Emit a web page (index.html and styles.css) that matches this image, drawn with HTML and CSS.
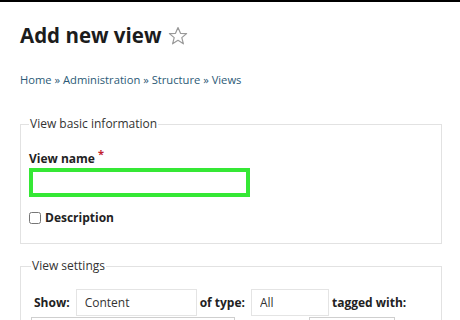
FILE: index.html
```html
<!DOCTYPE html>
<html lang="en">
<head>
    <meta charset="UTF-8">
    <meta name="viewport" content="width=device-width, initial-scale=1.0">
    <title>Add new view</title>
    <link rel="stylesheet" href="styles.css">
</head>
<body>

    <div class="topbar"></div>

    <div class="page">
        <h1 class="title">Add new view
            <svg class="star" width="20" height="20" viewBox="0 0 20 20">
                <polygon points="10,1.5 12.5,7.3 18.6,7.6 13.8,11.6 15.4,17.8 10,14.3 4.6,17.8 6.2,11.6 1.4,7.6 7.5,7.3" fill="none" stroke="#999" stroke-width="1.2" stroke-linejoin="round"/>
            </svg>
        </h1>

        <div class="breadcrumb">
            <a href="#">Home</a> » <a href="#">Administration</a> » <a href="#">Structure</a> » <a href="#">Views</a>
        </div>

        <fieldset class="box basic">
            <legend>View basic information</legend>
            <label class="field-label">View name <span class="req">*</span></label>
            <input type="text" class="name-input">
            <label class="check"><input type="checkbox"> Description</label>
        </fieldset>

        <fieldset class="box settings">
            <legend>View settings</legend>
            <div class="row">
                <span class="lbl">Show:</span>
                <input type="text" class="sel sel-show" value="Content">
                <span class="lbl">of type:</span>
                <input type="text" class="sel sel-type" value="All">
                <span class="lbl">tagged with:</span>
            </div>
            <div class="row next">
                <input type="text" class="sel sel-a">
                <input type="text" class="sel sel-b">
            </div>
        </fieldset>
    </div>

</body>
</html>
```

FILE: styles.css
```css
body {
    margin: 0;
    font-family: "Open Sans", "DejaVu Sans", sans-serif;
    color: #222;
    background: #fff;
    overflow: hidden;
}
.topbar {
    height: 2px;
    background: #000;
}
.page {
    padding: 0 18px 0 20px;
}
.title {
    margin: 20px 0 0;
    font-size: 20.5px;
    line-height: 26px;
    font-weight: bold;
    color: #1c1c1c;
    display: flex;
    align-items: center;
    gap: 7px;
}
.star {
    margin-top: 1px;
}
.breadcrumb {
    margin-top: 25px;
    font-size: 11.2px;
    line-height: 14px;
    color: #2b5a76;
}
.breadcrumb a {
    color: #2b5a76;
    text-decoration: none;
}
.box {
    margin: 0;
    border: 1px solid #e2e2e2;
    padding: 0 8px;
}
.box legend {
    padding: 0 1px;
    font-size: 12px;
    line-height: 14px;
    color: #333;
}
.basic {
    margin-top: 30px;
    padding-bottom: 18px;
}
.field-label {
    display: block;
    margin-top: 15px;
    font-size: 12px;
    line-height: 15px;
    font-weight: bold;
}
.req {
    color: #c21e2e;
    font-size: 11px;
    vertical-align: 5px;
}
.name-input {
    display: block;
    box-sizing: border-box;
    width: 221px;
    height: 29px;
    margin: 2px 0 0;
    border: 4px solid #35e835;
    outline: none;
    padding: 0;
}
.check {
    display: flex;
    align-items: center;
    gap: 4px;
    margin-top: 13px;
    font-size: 12px;
    font-weight: bold;
    line-height: 15px;
}
.check input {
    margin: 0;
    width: 12px;
    height: 12px;
}
.settings {
    margin-top: 15px;
    padding-left: 10px;
}
.row {
    display: flex;
    align-items: center;
    margin-top: 16px;
}
.lbl {
    font-size: 12px;
    font-weight: bold;
    margin: 0 6px 0 3px;
}
.sel {
    box-sizing: border-box;
    height: 27px;
    border: 1px solid #e4e4e4;
    padding: 0 8px;
    font-family: "Open Sans", "DejaVu Sans", sans-serif;
    font-size: 12px;
    color: #333;
    background: #fff;
}
.sel-show { width: 121px; }
.sel-type { width: 78px; }
.row.next {
    margin-top: 1px;
    gap: 74px;
}
.sel-a { width: 204px; border-color: #cfcfcf; }
.sel-b { width: 86px; border-color: #cfcfcf; }
```
